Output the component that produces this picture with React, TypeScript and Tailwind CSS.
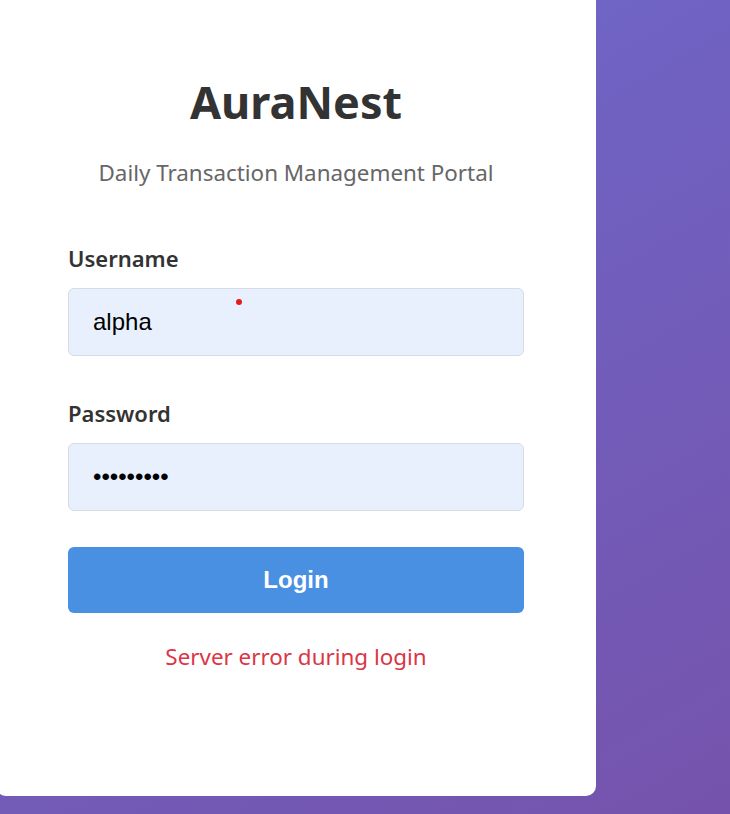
import {useState} from 'react';

const sans = 'font-["Noto_Sans","Open_Sans",sans-serif]';

export default function App() {
  const [username, setUsername] = useState('alpha');
  const [password, setPassword] = useState('123456789');

  return (
    <div className="min-h-screen w-full overflow-hidden bg-[linear-gradient(150deg,#6d6acd_0%,#7553ac_100%)] pb-[18px]">
      <div
        className={`-ml-1 w-[600px] rounded-b-[10px] bg-white px-[72px] pt-[74px] pb-[124px] ${sans}`}>
        <h1 className="text-center text-[45px] font-bold leading-[56px] text-[#333333]">
          AuraNest
        </h1>
        <p className="mt-[28px] text-center text-[22.4px] leading-[30px] text-[#666666]">
          Daily Transaction Management Portal
        </p>

        <form className="mt-[55px] flex flex-col" onSubmit={e => e.preventDefault()}>
          <label className="mb-[15px] text-[22px] font-semibold leading-[30px] text-[#333333]">
            Username
          </label>
          <div className="relative">
            <input
              value={username}
              onChange={e => setUsername(e.target.value)}
              className="h-[68px] w-full rounded-[6px] border border-[#d6dce6] bg-[#e8f0fe] px-[24px] font-['Liberation_Sans',Arial,sans-serif] text-[24px] text-black outline-none"
            />
            <span className="absolute left-[168px] top-[11px] h-[6px] w-[6px] rounded-full bg-[#e41b1b]" />
          </div>

          <label className="mt-[42px] mb-[15px] text-[22px] font-semibold leading-[30px] text-[#333333]">
            Password
          </label>
          <input
            type="password"
            value={password}
            onChange={e => setPassword(e.target.value)}
            className="h-[68px] w-full rounded-[6px] border border-[#d6dce6] bg-[#e8f0fe] px-[24px] font-['Liberation_Sans',Arial,sans-serif] text-[24px] text-black outline-none"
          />

          <button
            type="submit"
            className="mt-[36px] h-[66px] w-full rounded-[6px] bg-[#4a90e2] font-['Liberation_Sans',Arial,sans-serif] text-[24px] font-bold text-white">
            Login
          </button>
        </form>

        <p className="mt-[29px] text-center text-[22.4px] leading-[30px] text-[#dc3545]">
          Server error during login
        </p>
      </div>
    </div>
  );
}
